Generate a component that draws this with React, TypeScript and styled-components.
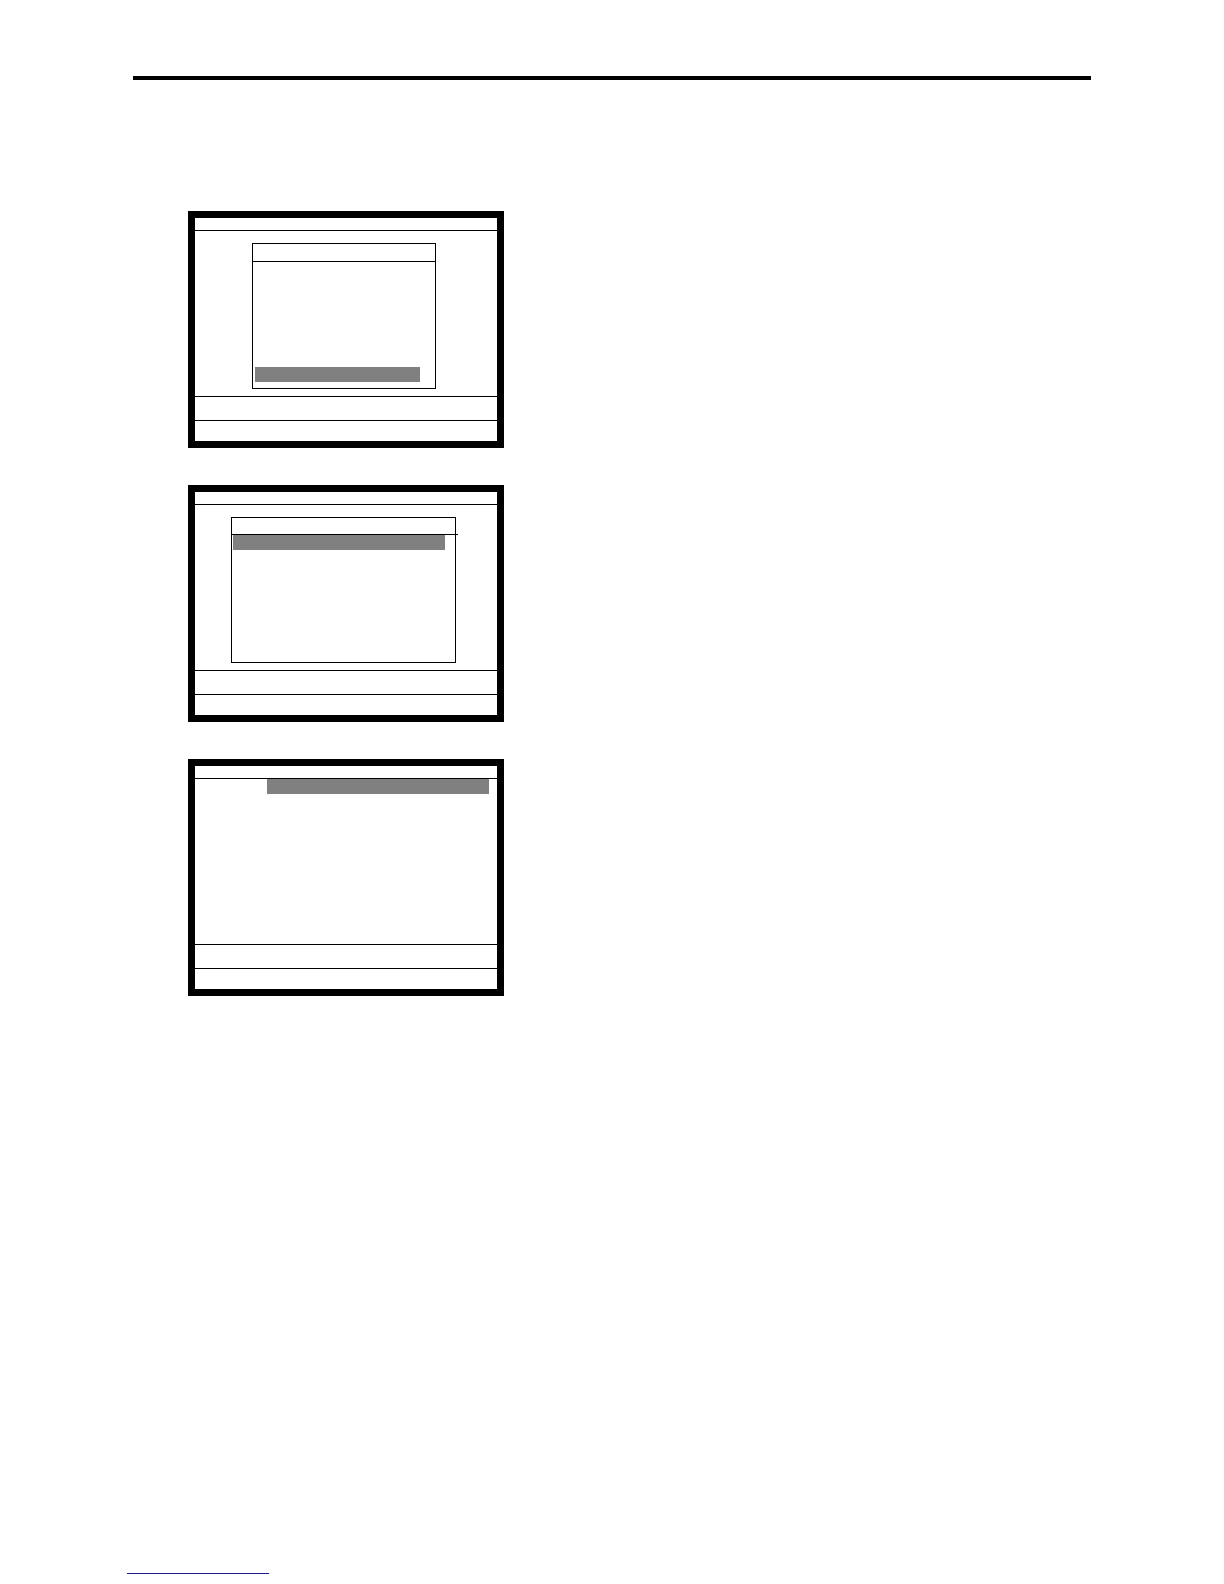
import React from "react";
import styled, { createGlobalStyle } from "styled-components";

const GlobalStyle = createGlobalStyle`
  html, body {
    margin: 0;
    padding: 0;
    background: #ffffff;
    font-family: "Liberation Sans", Arial, sans-serif;
  }
`;

type DialogSpec = {
  left: number;
  width: number;
  headerHeight: number;
  selected: "first" | "last";
  insetLeft: number;
  insetRight: number;
  overhang: number;
};

type ScreenSpec = {
  dialog?: DialogSpec;
  barLeft?: number;
};

const screens: ScreenSpec[] = [
  {
    dialog: { left: 57, width: 184, headerHeight: 17, selected: "last", insetLeft: 2, insetRight: 15, overhang: 0 },
  },
  {
    dialog: { left: 36, width: 225, headerHeight: 16, selected: "first", insetLeft: 1, insetRight: 10, overhang: 2 },
  },
  { barLeft: 72 },
];

export default function App() {
  return (
    <>
      <GlobalStyle />
      <Page>
        <TopRule />
        <ScreenColumn>
          {screens.map((s, i) => (
            <Screen key={i}>
              <TitleBar />
              <Body>
                {s.dialog && (
                  <Dialog $left={s.dialog.left} $width={s.dialog.width}>
                    <DialogHeader $height={s.dialog.headerHeight} $overhang={s.dialog.overhang} />
                    <DialogList $selected={s.dialog.selected}>
                      <Highlight $left={s.dialog.insetLeft} $right={s.dialog.insetRight} />
                    </DialogList>
                  </Dialog>
                )}
                {s.barLeft !== undefined && <InputBar $left={s.barLeft} />}
              </Body>
              <StatusRow />
              <KeyRow />
            </Screen>
          ))}
        </ScreenColumn>
        <FooterLink />
      </Page>
    </>
  );
}

const Page = styled.div`
  width: 1224px;
  min-height: 1584px;
  padding-top: 76px;
  box-sizing: border-box;
`;

const TopRule = styled.div`
  margin-left: 133px;
  width: 958px;
  height: 4px;
  background: #000;
`;

const ScreenColumn = styled.div`
  margin: 131px 0 0 188px;
  display: flex;
  flex-direction: column;
  gap: 37px;
`;

const Screen = styled.div`
  width: 302px;
  height: 223px;
  border: 7px solid #000;
  display: flex;
  flex-direction: column;
  background: #fff;
`;

const TitleBar = styled.div`
  height: 12px;
  border-bottom: 1px solid #000;
  flex-shrink: 0;
`;

const Body = styled.div`
  height: 165px;
  flex-shrink: 0;
  display: flex;
  flex-direction: column;
  align-items: flex-start;
`;

const Dialog = styled.div<{ $left: number; $width: number }>`
  margin: 12px 0 0 ${(p) => p.$left}px;
  width: ${(p) => p.$width}px;
  height: 146px;
  box-sizing: border-box;
  border: 1px solid #000;
  display: flex;
  flex-direction: column;
`;

const DialogHeader = styled.div<{ $height: number; $overhang: number }>`
  position: relative;
  height: ${(p) => p.$height}px;
  border-bottom: 1px solid #000;
  flex-shrink: 0;

  &::after {
    content: "";
    position: absolute;
    right: -${(p) => p.$overhang + 1}px;
    bottom: -1px;
    width: ${(p) => p.$overhang + 1}px;
    height: 1px;
    background: #000;
  }
`;

const DialogList = styled.div<{ $selected: "first" | "last" }>`
  flex: 1;
  display: flex;
  flex-direction: column;
  justify-content: ${(p) => (p.$selected === "last" ? "flex-end" : "flex-start")};
  padding-bottom: ${(p) => (p.$selected === "last" ? 6 : 0)}px;
`;

const Highlight = styled.div<{ $left: number; $right: number }>`
  height: 15px;
  margin: 0 ${(p) => p.$right}px 0 ${(p) => p.$left}px;
  background: #808080;
`;

const InputBar = styled.div<{ $left: number }>`
  align-self: stretch;
  height: 15px;
  margin: 0 8px 0 ${(p) => p.$left}px;
  background: #808080;
`;

const StatusRow = styled.div`
  height: 23px;
  border-top: 1px solid #000;
  flex-shrink: 0;
`;

const KeyRow = styled.div`
  flex: 1;
  border-top: 1px solid #000;
`;

const FooterLink = styled.div`
  margin: 577px 0 0 127px;
  width: 142px;
  height: 1px;
  background: #1a1a8c;
`;
